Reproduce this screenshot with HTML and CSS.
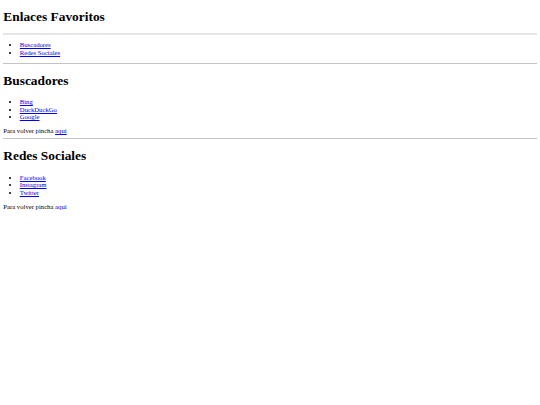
FILE: index.html
```html
<!DOCTYPE html>
<html lang="es">
<head>
    <meta charset="UTF-8">
    <meta name="viewport" content="width=device-width, initial-scale=1.0">
    <title>Enlaces Favoritos</title>
    <link rel="stylesheet" href="styles.css">
</head>
<body>
    <h1 id="inicio" class="top">Enlaces Favoritos</h1>
    <hr class="first">
    <ul>
        <li><a href="#buscadores">Buscadores</a></li>
        <li><a href="#redes">Redes Sociales</a></li>
    </ul>
    <hr>

    <!-- Buscadores -->
    <h1 id="buscadores">Buscadores</h1>
    <ul>
        <li><a href="#">Bing</a></li>
        <li><a href="#">DuckDuckGo</a></li>
        <li><a href="#">Google</a></li>
    </ul>
    <div class="volver">Para volver pincha <a href="#inicio">aquí</a></div>
    <hr>

    <!-- Redes Sociales -->
    <h1 id="redes">Redes Sociales</h1>
    <ul>
        <li><a href="#">Facebook</a></li>
        <li><a href="#">Instagram</a></li>
        <li><a href="#">Twitter</a></li>
    </ul>
    <div class="volver">Para volver pincha <a href="#inicio">aquí</a></div>
</body>
</html>
```

FILE: styles.css
```css
html {
    font-size: 6.7px;
}
body {
    margin: 3.3px;
    font-family: "Liberation Serif", "Times New Roman", serif;
    font-size: 1rem;
    line-height: 7.6px;
    color: #000;
    background-color: #fff;
}
h1 {
    font-size: 2rem;
    line-height: 15.4px;
    font-weight: bold;
    margin: 9px 0 10px;
}
h1.top {
    margin: 5.8px 0 8.2px;
}
hr {
    border: none;
    border-top: 1px solid #c4c4c4;
    margin: 0.5rem 0;
}
hr.first {
    border-top-color: #e4e4e4;
    height: 1px;
    background-color: #e8e8e8;
}
ul {
    margin: 6.4px 0;
    padding-left: 16.5px;
}
.volver {
    margin: 0;
}
a {
    color: #0000ee;
}
```
